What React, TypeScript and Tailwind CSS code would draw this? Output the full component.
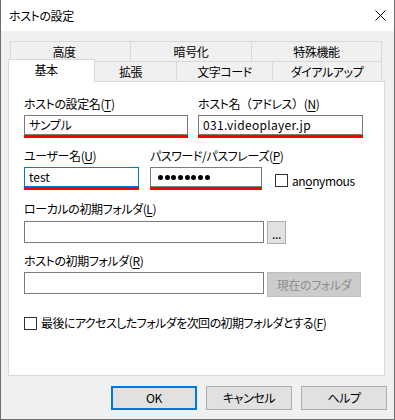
import type { ReactNode } from 'react';

// Mnemonic marker like (T) with the letter underlined
function Key({ k }: { k: string }) {
  return (
    <span>
      (<u className="underline-offset-2">{k}</u>)
    </span>
  );
}

function Field({ width, focused, children }: { width: string; focused?: boolean; children?: ReactNode }) {
  return (
    <div className={width}>
      <div
        className={
          focused
            ? 'h-[20px] bg-white border border-[#0078d7] flex items-center px-[4px]'
            : 'h-[20px] bg-white border border-[#7a7a7a] flex items-center px-[4px]'
        }
      >
        {children}
      </div>
      <div className="h-[3px] bg-[#ff0000]" />
    </div>
  );
}

function Checkbox() {
  return <div className="w-[13px] h-[13px] shrink-0 bg-white border border-[#333333]" />;
}

function Tabs() {
  return (
    <div className="flex flex-col">
      {/* back row */}
      <div className="ml-[2px] w-[372px] h-[20px] flex border-t border-l border-[#d9d9d9]">
        <div className="w-[120px] border-r border-[#d9d9d9] flex items-center justify-center pr-[13px]">高度</div>
        <div className="w-[121px] border-r border-[#d9d9d9] flex items-center justify-center">暗号化</div>
        <div className="flex-1 border-r border-[#d9d9d9] flex items-center justify-center">特殊機能</div>
      </div>
      {/* front row */}
      <div className="h-[20px] flex items-end">
        <div className="relative z-10 -mb-px w-[87px] h-[23px] bg-white border-x border-t border-[#d9d9d9] flex items-center justify-center pr-[11px] pb-[2px]">
          基本
        </div>
        <div className="w-[82px] h-[20px] border-t border-r border-[#d9d9d9] flex items-center justify-center pr-[10px]">拡張</div>
        <div className="w-[96px] h-[20px] border-t border-r border-[#d9d9d9] flex items-center justify-center">文字コード</div>
        <div className="w-[109px] h-[20px] border-t border-r border-[#d9d9d9] flex items-center justify-center">ダイアルアップ</div>
      </div>
    </div>
  );
}

function Panel() {
  return (
    <div className="w-[377px] h-[295px] bg-white border border-[#d9d9d9] pl-[15px] pt-[14px] leading-[16px]">
      {/* host name row */}
      <div className="flex">
        <div className="flex flex-col w-[164px]">
          <div>ホストの設定名<Key k="T" /></div>
          <div className="mt-[3px]">
            <Field width="w-[164px]">サンプル</Field>
          </div>
        </div>
        <div className="flex flex-col w-[165px] ml-[10px]">
          <div className="whitespace-nowrap">
            ホスト名<span className="[font-feature-settings:normal]">（</span>アドレス<span className="[font-feature-settings:normal]">）</span><Key k="N" />
          </div>
          <div className="mt-[3px]">
            <Field width="w-[165px]">
              <span className="tracking-[0.3px]">031.videoplayer.jp</span>
            </Field>
          </div>
        </div>
      </div>

      {/* user row */}
      <div className="flex mt-[10px]">
        <div className="flex flex-col w-[115px]">
          <div>ユーザー名<Key k="U" /></div>
          <div className="mt-[3px]">
            <Field width="w-[115px]" focused>
              <span className="tracking-normal">test</span>
            </Field>
          </div>
        </div>
        <div className="flex flex-col w-[112px] ml-[11px]">
          <div className="whitespace-nowrap">パスワード/パスフレーズ<Key k="P" /></div>
          <div className="mt-[3px]">
            <Field width="w-[112px]">
              <div className="flex gap-[1.7px] pl-[3px]">
                {Array.from({ length: 8 }).map((_, i) => (
                  <span key={i} className="w-[5px] h-[5px] rounded-full bg-black" />
                ))}
              </div>
            </Field>
          </div>
        </div>
        <div className="ml-[13px] mt-[26px] h-[13px] flex items-center gap-[4px]">
          <Checkbox />
          <span>
            an<u className="underline-offset-2">o</u>nymous
          </span>
        </div>
      </div>

      {/* local folder */}
      <div className="mt-[11px]">ローカルの初期フォルダ<Key k="L" /></div>
      <div className="mt-[4px] flex items-start gap-[3px]">
        <div className="w-[240px] h-[22px] bg-white border border-[#7a7a7a]" />
        <button className="w-[19px] h-[23px] bg-[#e1e1e1] border border-[#adadad] flex items-center justify-center leading-none pt-[2px]">
          ...
        </button>
      </div>

      {/* host folder */}
      <div className="mt-[9px]">ホストの初期フォルダ<Key k="R" /></div>
      <div className="mt-[3px] flex items-start gap-[3px]">
        <div className="w-[240px] h-[22px] bg-white border border-[#7a7a7a]" />
        <button disabled className="w-[94px] h-[25px] bg-[#cccccc] border border-[#bfbfbf] text-[#8d8d8d] flex items-center justify-center">
          現在のフォルダ
        </button>
      </div>

      {/* remember last folder */}
      <div className="mt-[18px] flex items-center gap-[4px]">
        <Checkbox />
        <span className="tracking-[-0.55px]">最後にアクセスしたフォルダを次回の初期フォルダとする<Key k="F" /></span>
      </div>
    </div>
  );
}

export default function App() {
  return (
    <div className="w-[395px] h-[420px] flex flex-col bg-[#f0f0f0] border-x border-b border-[#6e6e6e] text-[12px] tracking-[-0.4px] text-black font-[family-name:'Noto_Sans_CJK_JP',sans-serif] [font-feature-settings:'palt']">
      <div className="h-[31px] shrink-0 bg-white flex items-center justify-between pl-[8px] pr-[8px]">
        <span>ホストの設定</span>
        <svg width="11" height="11" viewBox="0 0 11 11">
          <path d="M0.5 0.5L10.5 10.5M10.5 0.5L0.5 10.5" stroke="#000" strokeWidth="1" />
        </svg>
      </div>

      <div className="flex-1 flex flex-col px-[7px] pt-[10px]">
        <Tabs />
        <Panel />
        <div className="mt-[10px] flex justify-end gap-[9px]">
          <button className="w-[86px] h-[24px] bg-[#e1e1e1] border-2 border-[#0078d7]">OK</button>
          <button className="w-[86px] h-[24px] bg-[#e1e1e1] border border-[#adadad]">キャンセル</button>
          <button className="w-[86px] h-[24px] bg-[#e1e1e1] border border-[#adadad]">ヘルプ</button>
        </div>
      </div>
    </div>
  );
}
